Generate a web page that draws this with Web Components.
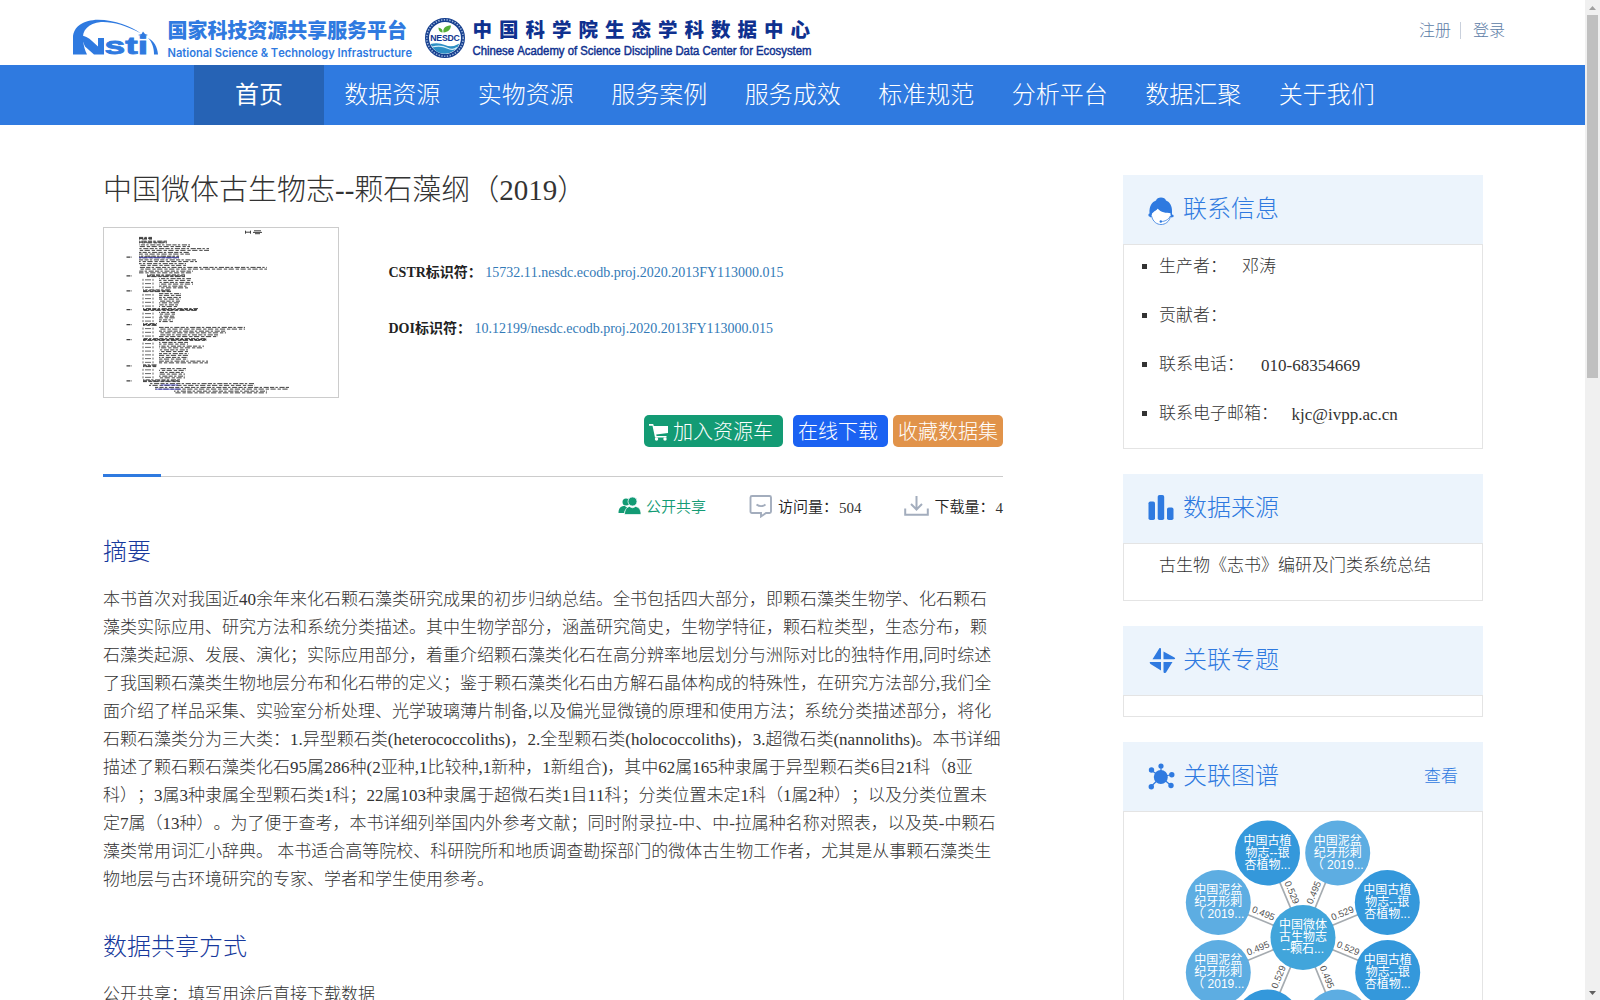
<!DOCTYPE html>
<html lang="zh-CN">
<head>
<meta charset="utf-8">
<title>中国微体古生物志--颗石藻纲（2019）</title>
<style>
html,body{margin:0;height:100%;overflow:hidden;background:#fff}
body{font-family:"Liberation Serif","Noto Sans CJK SC",serif;font-weight:300;color:#333;text-spacing-trim:space-all;font-size:17px;font-kerning:none}
</style>
</head>
<body>
<app-page></app-page>
<script>
const define = (name, html, extra) => customElements.define(name, class extends HTMLElement {
  connectedCallback() {
    if (this.shadowRoot) return;
    const root = this.attachShadow({ mode: 'open' });
    root.innerHTML = typeof html === 'function' ? html(this) : html;
    if (extra) extra(this, root);
  }
});

define('site-brand', `
<style>:host{display:block;height:65px}svg{display:block;overflow:visible}</style>
<svg width="760" height="65" viewBox="60 0 760 65">
  <g fill="#2f7ae0">
    <path d="M73 54.500V38C73 26 84 20 98 19.700C115 20 131 26 141 33.500C126 25 112 21.500 101 22C88 23 82 31 83 39C83.500 46 85 50 87 54.500Z"/>
    <path d="M80 34.500C84 36 89 37.500 92 41L98 46.500V38H104V54.500H94L85 46.500Z"/>
    <path d="M143 31.500L145 34L148 35L145 36L143 39L141.500 36L138 35L141.500 34Z"/>
    <path d="M148 38C154 41 157.500 47 158 54.500H154C154 48 152 42 148 38Z"/>
    <text x="104.500" y="54.200" font-family="Liberation Sans" font-weight="700" font-size="24" textLength="43.500" lengthAdjust="spacingAndGlyphs" stroke="#2f7ae0" stroke-width=".8">sti</text>
    <text x="167.500" y="37.500" font-family="Noto Sans CJK SC" font-weight="900" font-size="20" textLength="239.500">国家科技资源共享服务平台</text>
    <text x="167.500" y="56.500" font-family="Inter" font-weight="600" font-size="11.500" textLength="244.500" lengthAdjust="spacingAndGlyphs">National Science &amp; Technology Infrastructure</text>
  </g>
  <g>
    <circle cx="445" cy="38" r="18" fill="#fff" stroke="#17408f" stroke-width="4"/>
    <circle cx="445" cy="38" r="18.200" fill="none" stroke="#9fb6dc" stroke-width="1.600" stroke-dasharray="1.300 1.500"/>
    <path d="M430.500 44Q438 42 445 45T459.500 43.500A15.500 15.500 0 0 1 430.500 44Z" fill="#2d8fc4"/>
    <path d="M432 47Q441 45 447 48T457 47.500" fill="none" stroke="#d9f0fa" stroke-width="1.200"/>
    <path d="M443.500 32.500C442.500 28 446 25.500 451 25.500C450.500 30 448 32 443.500 32.500ZM442.500 32.500C439 32 438.500 29.500 438.500 27.500C441.500 28 443 30 442.500 32.500Z" fill="#54ad37"/>
    <text x="430.300" y="41" font-family="Liberation Sans" font-weight="700" font-size="8.700" fill="#0f358f" textLength="29.500">NESDC</text>
  </g>
  <g fill="#0f318f">
    <text x="472.500" y="37" font-family="Noto Sans CJK SC" font-weight="900" font-size="19.500" letter-spacing="7">中国科学院生态学科数据中心</text>
    <text x="472.500" y="55" font-family="Liberation Sans" font-size="12.300" stroke="#0f318f" stroke-width=".45" textLength="339" lengthAdjust="spacingAndGlyphs">Chinese Academy of Science Discipline Data Center for Ecosystem</text>
  </g>
</svg>`);

define('site-nav', `
<style>
:host{display:flex;height:60px;background:#2f7ae0;padding-left:194px}
a{box-sizing:border-box;width:133.500px;text-align:center;color:#fff;font-size:24px;line-height:60px;white-space:nowrap}
a.on{width:130px;background:#2663b5;font-weight:400;margin-right:1.500px}
</style>
<a class="on">首页</a><a>数据资源</a><a>实物资源</a><a>服务案例</a><a>服务成效</a><a>标准规范</a><a>分析平台</a><a>数据汇聚</a><a>关于我们</a>`);

define('site-header', `
<style>
:host{display:block}
.top{display:flex;justify-content:space-between;height:65px;padding:0 80px 0 60px}
.user{display:flex;align-items:center;height:58px;font-size:16px;color:#5b7ba6}
.user i{width:1px;height:17px;background:#c9d0dc;margin:2px 12px 0 9px}
</style>
<div class="top"><site-brand></site-brand><div class="user"><span>注册</span><i></i><span>登录</span></div></div>
<site-nav></site-nav>`);

// Table-of-contents preview: [indent, text width, bold, numbered] for each line.
const toc = [[35,13,1],[35,28,1],[35,51,0],[35,70,0],[35,51,0],[35,40,1,1],[35,58,0],[35,47,0],[35,128,0],[35,54,0],[43,38,1,1],[39,48,0],[39,50,0],[39,45,0],[39,28,1,1],[39,38,0],[39,38,0],[39,37,0],[39,35,0],[39,55,1,1],[39,32,0],[39,32,0],[39,30,0],[39,14,1,1],[39,102,0],[39,83,0],[39,75,0],[39,64,1,1],[39,45,0],[39,61,0],[39,45,0],[39,46,0],[39,45,0],[39,65,0],[39,14,1,1],[39,43,0],[39,42,0],[39,42,0],[39,37,1,1],[45,106,0],[51,134,0],[70,93,0]];
define('doc-thumb', () => {
  let s = '';
  toc.forEach(([x, w, b, n], i) => {
    const y = 9.4 + i * 3.75, k = i * 7;
    const marker = !b && x === 39;
    if (marker) s += `<path d="M39 ${y + .2}v2M49 ${y + .2}v2M41 ${y + 1.2}h6" stroke-width=".8"/>`;
    const a = marker ? 55 : x, len = marker ? w - 16 : w;
    s += `<path d="M${a} ${y}h${len}" stroke-width="1" stroke-dasharray="4.200 1.300 2.300 1.700 5.100 1.200" stroke-dashoffset="${k}"/>`
      + `<path d="M${a} ${y + 1.7}h${len}" stroke-width="1" stroke-dasharray="3.300 1.500 5.200 1.900" stroke-dashoffset="${k + 2}"/>`;
    if (b) s += `<path d="M${a} ${y + .9}h${len}" stroke-width="1.300" stroke-dasharray="4 1 3 1.200"/>`;
    if (n) s += `<path d="M22.500 ${y + 1}h5" stroke-width="1.200" stroke-dasharray="3.500 .6"/>`;
  });
  return `<style>:host{display:block;box-sizing:border-box;width:236px;height:171px;border:1px solid #ccc}svg{display:block}</style>
<svg width="234" height="169" fill="none" stroke="#111"><g opacity=".8"><path d="M141.500 2.700v3M146.500 2.700v3M141.500 4.200h5M150 2.800h7M149 4.400h9M151 5.700h5"/>${s}</g>
<path d="M35 29.700h40M57 157h17M52 161.200h25" stroke="#3b3bd0" stroke-width=".7"/></svg>`;
});

define('id-row', el => `
<style>
:host{display:flex;height:20px;line-height:22px;font-size:14px;white-space:nowrap}
b{font-weight:700;color:#222;margin-right:3.500px}a{color:#337ab7}
</style><b>${el.getAttribute('label')}</b><a><slot></slot></a>`);

define('action-button', `
<style>
:host{display:flex;align-items:center;box-sizing:border-box;height:32px;border-radius:5px;color:#fff;font-size:20px;line-height:30px;white-space:nowrap;padding:1px 5px 0}
</style><slot></slot>`);

define('stat-bar', `
<style>
:host{display:flex;justify-content:flex-end;align-items:center;height:24px;font-size:15px;color:#222;white-space:nowrap}
span{display:flex;align-items:center;height:24px}svg{display:block;margin-right:5px}
b{font-weight:inherit;line-height:20px;padding-top:2px}
.open{color:#139b74;margin-right:43px}.visit{margin-right:43px}
.open b,.visit b,.down b{font-weight:350}
i{font-style:normal;margin-left:1px;color:#333;line-height:20px;padding-top:3px}
</style>
<span class="open"><svg width="23" height="20" viewBox="0 0 22 20" fill="#139b74"><circle cx="7.500" cy="6" r="3.500"/><path d="M0 17C0 12 2 10.500 6 9.800L9 12C7.500 13.500 6 15 5.700 17Z"/><circle cx="14" cy="5.500" r="4.500" stroke="#ecf4fc" stroke-width=".8"/><path d="M6 18.500C6 13 9 11 11 10.500Q14 13 17 10.500C20 11 22.500 13 22.500 18.500Z" stroke="#fff" stroke-width=".7"/></svg><b>公开共享</b></span>
<span class="visit"><svg width="24" height="24" viewBox="0 0 24 24" fill="none" stroke="#a3adbd" stroke-width="1.900"><path d="M3 2H20.500Q22 2 22 3.500V17.500Q22 19 20.500 19H17L12 22.500V19H3Q1.500 19 1.500 17.500V3.500Q1.500 2 3 2Z"/><path d="M7.500 10.500Q12 13.800 16.500 10.500"/></svg><b>访问量：</b><i>504</i></span>
<span class="down"><svg width="25" height="24" viewBox="0 0 25 24" fill="none" stroke="#a3adbd" stroke-width="2"><path d="M1.200 14.500V20.800H23.800V14.500M12.500 2V14.500M7 10L12.500 15.500L18 10"/></svg><b>下载量：</b><i>4</i></span>`);

define('text-section', el => `
<style>
:host{display:block}
h2{margin:0 0 16px;font-size:24px;font-weight:inherit;line-height:36px;color:#17399c}
p{margin:0;font-size:17px;line-height:28px;white-space:nowrap}
</style><h2>${el.getAttribute('heading')}</h2><p><slot></slot></p>`);

define('dataset-detail', `
<style>
:host{display:block;width:900px}
h1{margin:0;font-size:29px;font-weight:inherit;line-height:30px;height:52px;white-space:nowrap}
.info{display:flex;gap:49.500px}
.ids{display:flex;flex-direction:column;gap:36px;padding-top:35px}
.actions{display:flex;justify-content:flex-end;margin-top:17px}
.rule{display:flex;height:4px;margin-top:26px;margin-bottom:17px;background:linear-gradient(#ccc,#ccc) 0 100%/100% 1px no-repeat}
.rule i{width:58px;height:3px;background:#2f7ae0;margin-top:1px}
svg{display:block}
.s1{margin-top:16px}.s2{margin-top:35px}
</style>
<h1>中国微体古生物志--颗石藻纲（2019）</h1>
<div class="info"><doc-thumb></doc-thumb><div class="ids">
<id-row label="CSTR标识符：">15732.11.nesdc.ecodb.proj.2020.2013FY113000.015</id-row>
<id-row label="DOI标识符：">10.12199/nesdc.ecodb.proj.2020.2013FY113000.015</id-row></div></div>
<div class="actions">
<action-button style="background:#139b74;width:139px;margin-right:10px"><svg width="20" height="18" viewBox="0 0 20 18" fill="#fff" style="margin-right:4px"><path d="M0 1H4.200L4.800 3H19V10L7.200 11.500L7.600 13H17.500V14.500H6L3.500 2.800H0Z"/><circle cx="7.500" cy="16" r="1.700"/><circle cx="16" cy="16" r="1.700"/></svg>加入资源车</action-button>
<action-button style="background:#1b62f2;width:95px;margin-right:5px">在线下载</action-button>
<action-button style="background:#e1934a;width:110px">收藏数据集</action-button></div>
<div class="rule"><i></i></div>
<stat-bar></stat-bar>
<text-section class="s1" heading="摘要">本书首次对我国近40余年来化石颗石藻类研究成果的初步归纳总结。全书包括四大部分，即颗石藻类生物学、化石颗石<br>藻类实际应用、研究方法和系统分类描述。其中生物学部分，涵盖研究简史，生物学特征，颗石粒类型，生态分布，颗<br>石藻类起源、发展、演化；实际应用部分，着重介绍颗石藻类化石在高分辨率地层划分与洲际对比的独特作用,同时综述<br>了我国颗石藻类生物地层分布和化石带的定义；鉴于颗石藻类化石由方解石晶体构成的特殊性，在研究方法部分,我们全<br>面介绍了样品采集、实验室分析处理、光学玻璃薄片制备,以及偏光显微镜的原理和使用方法；系统分类描述部分，将化<br>石颗石藻类分为三大类：1.异型颗石类(heterococcoliths)，2.全型颗石类(holococcoliths)，3.超微石类(nannoliths)。本书详细<br>描述了颗石颗石藻类化石95属286种(2亚种,1比较种,1新种，1新组合)，其中62属165种隶属于异型颗石类6目21科（8亚<br>科）；3属3种隶属全型颗石类1科；22属103种隶属于超微石类1目11科；分类位置未定1科（1属2种）；以及分类位置未<br>定7属（13种）。为了便于查考，本书详细列举国内外参考文献；同时附录拉-中、中-拉属种名称对照表，以及英-中颗石<br>藻类常用词汇小辞典。 本书适合高等院校、科研院所和地质调查勘探部门的微体古生物工作者，尤其是从事颗石藻类生<br>物地层与古环境研究的专家、学者和学生使用参考。</text-section>
<text-section class="s2" heading="数据共享方式">公开共享：填写用途后直接下载数据</text-section>`);

const icons = {
  contact: '<path d="M13 1.500C15.500 1.500 17.500 2.500 18 4.500C22 6 24 10 24 15V18.500L25.500 19V21L23 21.500L21.500 17C17 17 12.500 16 9.500 13C9 15.500 6 17.500 4 18L3 21.500L.500 20V18L1.500 17.500C1 10 4 6 8 4.500C8.500 2.500 10.500 1.500 13 1.500Z"/><path d="M4 17.500V20C5.500 26 9 28.500 13 28.500S21.500 26 22.500 20V16L10 12Z" fill="#fff"/><path d="M2.500 15.500C6 15.500 9 14.500 9.500 12.500C13 16.500 18 17 23 17.200V13L9 10L2.500 13Z"/><path d="M3.500 20C5 26 9 28.500 13 28.500S21.500 26 22.500 20C20 24 17 25.500 13 25.500" fill="none" stroke="#2f7ae0" stroke-width=".8"/><circle cx="12.800" cy="25.500" r="1.200"/>',
  bars: '<rect x=".5" y="6.500" width="6.500" height="18.500" rx="1.800"/><rect x="9.700" y="0" width="6.500" height="25" rx="1.800"/><rect x="19" y="12.500" width="6.500" height="12.500" rx="1.800"/>',
  topic: '<path d="M11.500 1Q13 .5 13 2V12.200H4.500ZM15.500 4.500L26.500 10.500Q28 12.200 26 12.200H15.500ZM2 15H13V23.500L2.500 17Q1 15.500 2 15ZM15.500 15H24.500L18 25.500Q15.500 27 15.500 24.500Z"/>',
  graph: '<g stroke="#2f7ae0" stroke-width="1.200"><path d="M13 14V3M13 14L3.500 7.500M13 14L24 11.500M13 14L3 23.500M13 14L23 22.500"/></g><circle cx="12.800" cy="14" r="7"/><circle cx="13" cy="3" r="2.600"/><circle cx="3.500" cy="7" r="2.700"/><circle cx="23.800" cy="11.700" r="2.700"/><circle cx="3.300" cy="23.700" r="2.700"/><circle cx="23" cy="22.500" r="2.700"/>'
};
define('side-card', el => `
<style>
:host{display:block;width:360px}
header{display:flex;height:69px;background:#ecf4fc;color:#2f7ae0;box-sizing:border-box;padding:0 25px 0 25px;font-size:24px;line-height:69px}
header svg{display:block;flex:none;width:28px;height:30px;margin-top:21px;margin-right:7px}
header em{margin-left:auto;font-style:normal;font-size:17px;line-height:70px}
.body{box-sizing:border-box;border:1px solid #e4e4e4;background:#fff;height:${el.getAttribute('body')}px}
</style>
<header><svg viewBox="0 0 28 30" fill="#2f7ae0">${icons[el.getAttribute('icon')]}</svg><span>${el.getAttribute('heading')}</span>${el.hasAttribute('more') ? '<em>' + el.getAttribute('more') + '</em>' : ''}</header>
<div class="body"><slot></slot></div>`);

define('contact-item', el => `
<style>
:host{display:flex;align-items:center;height:49px;font-size:17px;line-height:24px;padding-left:18px;white-space:nowrap}
i{width:5px;height:5px;background:#333;margin-right:12px}
span{margin-left:${el.getAttribute('gap') || 0}px;padding-top:${el.getAttribute('drop') || 0}px}
</style><i></i>${el.getAttribute('label')}<span><slot></slot></span>`);

define('relation-graph', () => {
  const A = ['中国古植', '物志--银', '杏植物...'], B = ['中国泥盆', '纪牙形刺', '（ 2019...'];
  const c = [179, 125.5];
  const nodes = [[143.5,41,A,'0.529'],[213.7,41,B,'0.495'],[263.3,90.5,A,'0.529'],[263.7,160.5,A,'0.529'],[94.3,90.5,B,'0.495'],[94.3,160.5,B,'0.495'],[143.5,210,A,'0.529'],[213.7,210,B,'0.495']];
  const node = (x, y, t, f) => `<circle cx="${x}" cy="${y}" r="32.500" fill="${f}"/>` +
    t.map((l, i) => `<text x="${x}" y="${y - 8.5 + i * 12}" fill="#fff">${l}</text>`).join('');
  let e = '', n = '';
  nodes.forEach(([x, y, t, w]) => {
    e += `<path d="M${c[0]} ${c[1]}L${x} ${y}" stroke="#a5abb0" stroke-width="1.700"/>`;
    let a = Math.atan2(y - c[1], x - c[0]) * 180 / Math.PI;
    if (a > 90) a -= 180; if (a < -90) a += 180;
    const mx = (x + c[0]) / 2, my = (y + c[1]) / 2;
    e += `<text transform="translate(${mx} ${my}) rotate(${a})" y="-4" font-size="9.500" fill="#555">${w}</text>`;
    n += node(x, y, t, t === A ? '#3498db' : '#5dade2');
  });
  return `<style>:host{display:block;height:188px;overflow:hidden}svg{display:block}text{font-weight:400}</style>
<svg width="358" height="250" font-family="Liberation Sans, Noto Sans CJK SC, sans-serif" font-size="12" text-anchor="middle">${e}${n}${node(c[0], c[1], ['中国微体', '古生物志', '--颗石...'], '#41a5db')}</svg>`;
});

define('side-column', `
<style>
:host{display:flex;flex-direction:column;gap:25px}
.src{font-size:17px;line-height:24px;padding:10px 0 0 35px;white-space:nowrap}
</style>
<side-card icon="contact" heading="联系信息" body="205">
<contact-item style="margin-top:-3px" label="生产者：" gap="15">邓涛</contact-item>
<contact-item label="贡献者："></contact-item>
<contact-item label="联系电话：" gap="17" drop="2">010-68354669</contact-item>
<contact-item label="联系电子邮箱：" gap="13.5" drop="2">kjc@ivpp.ac.cn</contact-item></side-card>
<side-card icon="bars" heading="数据来源" body="58"><div class="src">古生物《志书》编研及门类系统总结</div></side-card>
<side-card icon="topic" heading="关联专题" body="22"></side-card>
<side-card icon="graph" heading="关联图谱" more="查看" body="240"><relation-graph></relation-graph></side-card>`);

define('page-scrollbar', `
<style>
:host{display:flex;flex-direction:column;width:15px;height:1000px;background:#f0f0f0;flex:none}
svg{display:block;flex:none}.track{flex:1}.thumb{width:11px;height:363px;margin-left:2px;background:#c0c0c0}
</style>
<svg width="15" height="15"><path d="M4 10L7.500 6L11 10Z" fill="#a0a0a0"/></svg><div class="track"><div class="thumb"></div></div>
<svg width="15" height="15"><path d="M4 6L7.500 10L11 6Z" fill="#606060"/></svg>`);

define('app-page', `
<style>
:host{display:flex;width:1600px;height:1000px;overflow:hidden}
.view{flex:1;min-width:0;height:1000px;overflow:hidden}
main{display:flex;justify-content:space-between;padding:50px 102px 0 103px}
</style>
<div class="view"><site-header></site-header><main><dataset-detail></dataset-detail><side-column></side-column></main></div>
<page-scrollbar></page-scrollbar>`);
</script>
</body>
</html>
